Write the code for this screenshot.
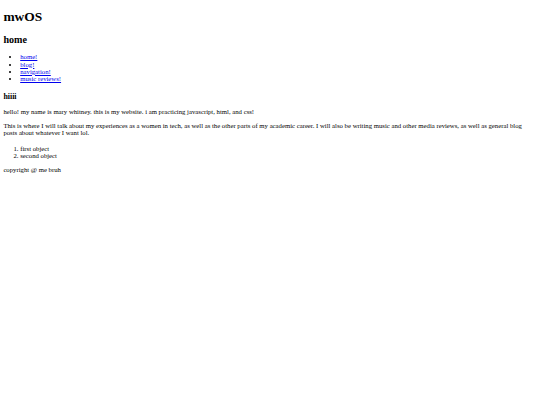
const link = 'text-[#0000ee] underline';

export default function App() {
  return (
    <div className="px-[3.4px] py-[0.1px] font-['Liberation_Serif',serif] text-[6.72px] leading-[7.2px] text-black">
      <h1 className="my-[9px] text-[13.44px] leading-[15.4px] font-bold">mwOS</h1>
      <h2 className="my-[8.4px] text-[10.08px] leading-[11.6px] font-bold">home</h2>
      <ul className="my-[6.72px] list-disc pl-[16.8px]">
        <li><a href="#" className={link}>home!</a></li>
        <li><a href="#" className={link}>blog!</a></li>
        <li><a href="#" className={link}>navigation!</a></li>
        <li><a href="#" className={link}>music reviews!</a></li>
      </ul>
      <h3 className="mt-[9.9px] mb-[6.72px] text-[7.86px] leading-[9px] font-bold">hiiii</h3>
      <p className="my-[6.72px]">hello! my name is mary whitney. this is my website. i am practicing javascript, html, and css!</p>
      <p className="my-[6.72px]">
        This is where I will talk about my experiences as a women in tech, as well as the other parts of my academic career. I will also be writing music and other media reviews, as well as general blog posts about whatever I want lol.
      </p>
      <ol className="mt-[8.7px] mb-[6.72px] list-decimal pl-[16.8px]">
        <li>first object</li>
        <li>second object</li>
      </ol>
      <p className="my-[6.72px]">copyright @ me bruh</p>
    </div>
  );
}
